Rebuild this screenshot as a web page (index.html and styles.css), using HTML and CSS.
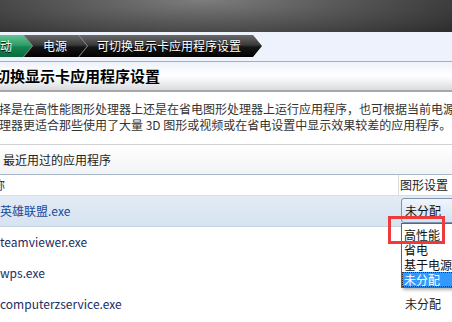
FILE: index.html
```html
<!DOCTYPE html>
<html lang="zh-CN">
<head>
    <meta charset="UTF-8">
    <meta name="viewport" content="width=device-width, initial-scale=1.0">
    <title>可切换显示卡应用程序设置</title>
    <link rel="stylesheet" href="styles.css">
</head>
<body>

    <div class="topbar"></div>

    <div class="crumbs">
        <div class="trail">
            <span class="crumb crumb-green">动</span>
            <span class="crumb crumb-power">电源</span>
            <span class="crumb crumb-current">可切换显示卡应用程序设置</span>
        </div>
    </div>

    <div class="title">切换显示卡应用程序设置</div>

    <div class="desc">
        <p>择是在高性能图形处理器上还是在省电图形处理器上运行应用程序，也可根据当前电源状态</p>
        <p>理器更适合那些使用了大量 3D 图形或视频或在省电设置中显示效果较差的应用程序。</p>
    </div>

    <div class="group">
        <div class="group-head">最近用过的应用程序</div>

        <div class="row row-head">
            <div class="cell cell-name"><span class="cut">名称</span></div>
            <div class="cell cell-setting">图形设置</div>
        </div>

        <div class="row row-selected">
            <div class="cell cell-name">英雄联盟.exe</div>
            <div class="cell cell-setting">
                <div class="combo">未分配</div>
                <ul class="dropdown">
                    <li>高性能</li>
                    <li>省电</li>
                    <li>基于电源</li>
                    <li class="active">未分配</li>
                </ul>
                <div class="highlight"></div>
            </div>
        </div>

        <div class="row">
            <div class="cell cell-name">teamviewer.exe</div>
            <div class="cell cell-setting"></div>
        </div>

        <div class="row">
            <div class="cell cell-name">wps.exe</div>
            <div class="cell cell-setting"></div>
        </div>

        <div class="row">
            <div class="cell cell-name">computerzservice.exe</div>
            <div class="cell cell-setting"><span class="value">未分配</span></div>
        </div>
    </div>

</body>
</html>
```

FILE: styles.css
```css
body {
    font-family: "Noto Sans CJK SC", "Noto Sans", sans-serif;
    font-size: 12px;
    margin: 0;
    padding: 0;
    width: 452px;
    height: 322px;
    overflow: hidden;
    background: #ffffff;
    color: #222;
}
.topbar {
    height: 32px;
    background: radial-gradient(ellipse 70% 160% at 45% 0%, #7d7d7d 0%, #575757 45%, #2c2c2c 100%);
}
.crumbs {
    height: 29px;
    background: #eef2fc;
    border-bottom: 1px solid #a9adb9;
}
.trail {
    display: inline-flex;
    margin-top: 3px;
    background: #8c8c8c;
    clip-path: polygon(0 0, calc(100% - 9px) 0, 100% 50%, calc(100% - 9px) 100%, 0 100%);
}
.crumb {
    height: 22px;
    line-height: 22px;
    color: #ffffff;
    white-space: nowrap;
    text-shadow: 0 1px 0 #000;
    background: linear-gradient(#6a6a6a 0%, #3a3a3a 45%, #161616 55%, #000 100%);
    clip-path: polygon(0 0, calc(100% - 9px) 0, 100% 50%, calc(100% - 9px) 100%, 0 100%, 9px 50%);
    margin-left: -8px;
}
.crumb-green {
    margin-left: 0;
    padding: 0 20px 0 0;
    background: linear-gradient(#63c596 0%, #2f9e68 45%, #168552 55%, #0b6a3d 100%);
    clip-path: polygon(0 0, calc(100% - 9px) 0, 100% 50%, calc(100% - 9px) 100%, 0 100%);
}
.crumb-power {
    padding: 0 20px 0 19px;
}
.crumb-current {
    padding: 0 21px 0 18px;
}
.title {
    height: 28px;
    line-height: 28px;
    font-size: 15px;
    font-weight: bold;
    color: #000;
    text-indent: -5px;
    white-space: nowrap;
    background: linear-gradient(#eef3fa 0%, #ffffff 50%, #d9dbdf 100%);
    border-bottom: 2px solid #a8a8a8;
}
.desc {
    padding: 9px 0 11px 0;
    color: #333;
    white-space: nowrap;
}
.desc p {
    margin: 0;
    line-height: 16px;
    text-indent: -1px;
}
.group-head {
    height: 29px;
    line-height: 29px;
    padding-left: 3px;
    color: #222;
    background: linear-gradient(#ffffff, #f2f3f5);
    border-top: 1px solid #d2d2d2;
    border-bottom: 1px solid #a9b8c8;
}
.row {
    display: grid;
    grid-template-columns: 399px 53px;
    height: 30px;
    line-height: 30px;
    border-bottom: 1px solid transparent;
}
.row-head {
    height: 20px;
    line-height: 20px;
    border-bottom: 1px solid #dedede;
}
.row-head .cell-name {
    border-right: 1px solid #dadada;
}
.row-head .cell-setting {
    padding-left: 1px;
    color: #222;
}
.cut {
    margin-left: -19px;
}
.cell {
    white-space: nowrap;
    overflow: visible;
}
.cell-name {
    color: #1c2d5f;
}
.row-selected {
    background: linear-gradient(#e2ebf5, #d6e3f1);
    border-bottom-color: #c6d4e4;
}
.row-selected .cell-name {
    color: #1a4a9c;
}
.cell-setting {
    position: relative;
}
.value {
    padding-left: 6px;
    color: #222;
}
.combo {
    margin: 2px 0 0 2px;
    width: 70px;
    height: 23px;
    line-height: 23px;
    padding-left: 3px;
    color: #111;
    border: 1px solid #7f95b0;
    border-radius: 3px;
    background: linear-gradient(#f0f5fb, #d2e2f3);
}
.dropdown {
    position: absolute;
    top: 27px;
    left: 2px;
    width: 70px;
    margin: 0;
    padding: 3px 0 0 0;
    list-style: none;
    background: #fff;
    border: 1px solid #646464;
    box-shadow: 2px 2px 3px rgba(0, 0, 0, 0.3);
}
.dropdown li {
    height: 15px;
    line-height: 15px;
    padding-left: 2px;
    color: #111;
}
.dropdown li.active {
    background: #3399ff;
    color: #ffffff;
    outline: 1px dotted #333;
    outline-offset: -1px;
}
.highlight {
    position: absolute;
    left: -11px;
    top: 20px;
    width: 57px;
    height: 28px;
    box-sizing: border-box;
    border: 3px solid #ec3b3b;
}
```
